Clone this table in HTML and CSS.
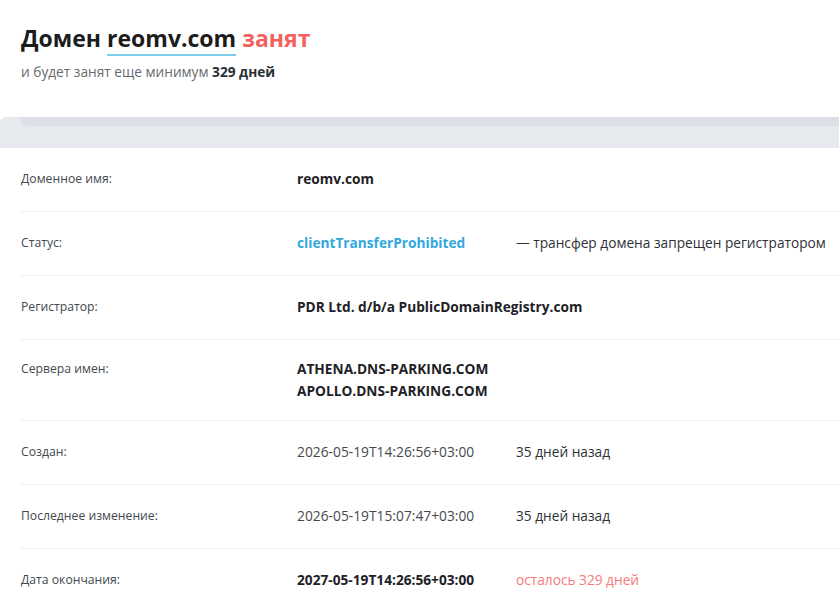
FILE: index.html
```html
<!DOCTYPE html>
<html lang="ru">
<head>
<meta charset="utf-8">
<title>Домен reomv.com занят</title>
<link rel="stylesheet" href="styles.css">
</head>
<body>
<header class="head">
  <h1 class="title">Домен <span class="domain">reomv.com</span> <span class="busy">занят</span></h1>
  <p class="sub">и будет занят еще минимум <b>329 дней</b></p>
</header>
<div class="band"><div class="band-strip"></div></div>
<section class="card">
  <div class="row">
    <div class="label">Доменное имя:</div>
    <div class="value strong">reomv.com</div>
    <div></div>
  </div>
  <div class="row">
    <div class="label">Статус:</div>
    <div class="value strong link">clientTransferProhibited</div>
    <div class="extra">— трансфер домена запрещен регистратором</div>
  </div>
  <div class="row">
    <div class="label">Регистратор:</div>
    <div class="value strong span">PDR Ltd. d/b/a PublicDomainRegistry.com</div>
  </div>
  <div class="row row-ns">
    <div class="label">Сервера имен:</div>
    <div class="value strong span">ATHENA.DNS-PARKING.COM<br>APOLLO.DNS-PARKING.COM</div>
  </div>
  <div class="row">
    <div class="label">Создан:</div>
    <div class="value">2026-05-19T14:26:56+03:00</div>
    <div class="extra">35 дней назад</div>
  </div>
  <div class="row">
    <div class="label">Последнее изменение:</div>
    <div class="value">2026-05-19T15:07:47+03:00</div>
    <div class="extra">35 дней назад</div>
  </div>
  <div class="row row-full">
    <div class="label">Дата окончания:</div>
    <div class="value strong">2027-05-19T14:26:56+03:00</div>
    <div class="extra left">осталось 329 дней</div>
  </div>
</section>
</body>
</html>
```
FILE: styles.css
```css
* { box-sizing: border-box; }
html, body {
  margin: 0;
  padding: 0;
  background: #ffffff;
  font-family: "Open Sans", "Noto Sans", sans-serif;
  color: #222;
}
.head {
  height: 117px;
  padding: 23px 0 0 21px;
}
.title {
  margin: 0;
  font-size: 23px;
  line-height: 30px;
  font-weight: 700;
  color: #1c1c1c;
}
.domain {
  border-bottom: 2px solid #7fcbea;
}
.busy { color: #f45f5f; }
.sub {
  margin: 11px 0 0;
  font-size: 13.7px;
  line-height: 16px;
  color: #666b70;
}
.sub b { color: #2a2f35; font-weight: 700; }
.band {
  height: 31px;
  background: #e6e9ed;
  border-top-left-radius: 6px;
}
.band-strip {
  margin-left: 20px;
  height: 9px;
  background: #dce0e6;
  border-bottom-left-radius: 8px;
}
.card {
  background: #fff;
  border-top-left-radius: 8px;
}
.row {
  display: grid;
  grid-template-columns: 276px 219px 1fr;
  align-items: start;
  padding: 20px 0 21px 1px;
  margin-left: 20px;
  border-bottom: 1px solid #f1f2f4;
  line-height: 22px;
}
.row-ns { padding-top: 18px; padding-bottom: 18px; }
.row-full { margin-left: 0; padding-left: 21px; border-bottom: none; }
.label {
  font-size: 12.2px;
  color: #44484d;
}
.value {
  font-size: 13.8px;
  color: #45494e;
}
.value.span { grid-column: 2 / 4; }
.strong { font-weight: 700; color: #1e2226; font-size: 13.7px; }
.link { color: #32a9dc; }
.extra {
  font-size: 13.7px;
  color: #2e3236;
}
.extra.left { color: #f47b7b; }
```
